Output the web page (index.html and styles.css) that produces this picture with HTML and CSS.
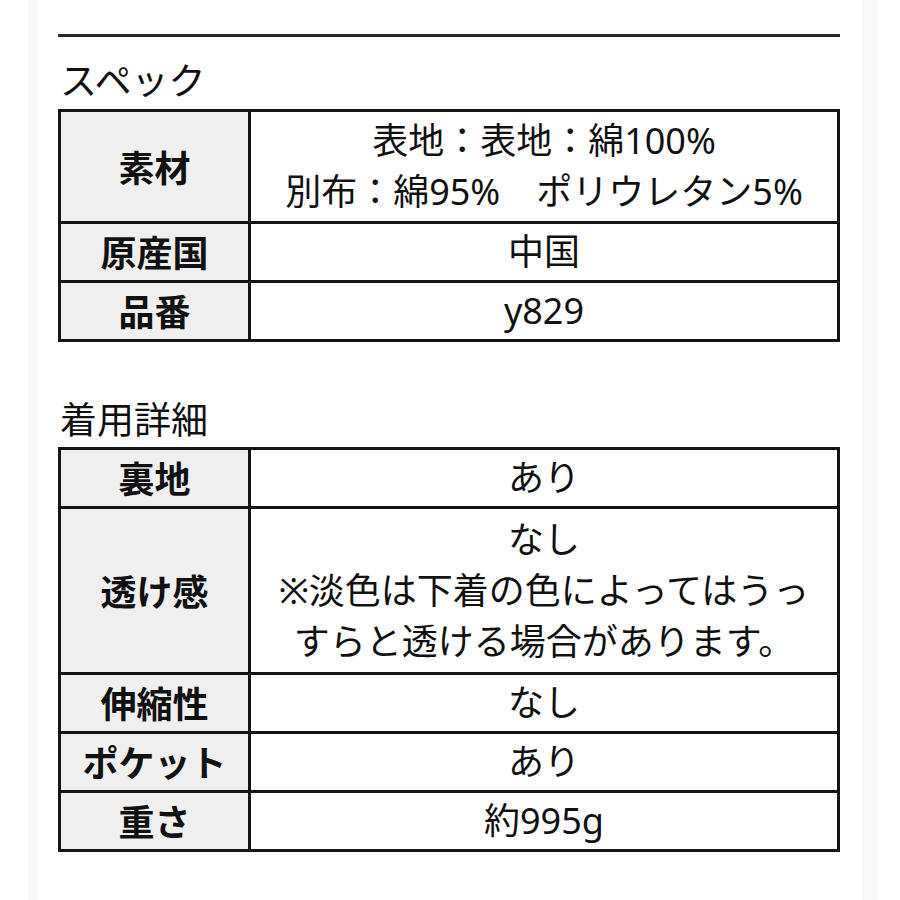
FILE: index.html
```html
<!DOCTYPE html>
<html lang="ja">
<head>
<meta charset="utf-8">
<link rel="stylesheet" href="styles.css">
</head>
<body>
<div class="frame">
  <div class="content">
    <hr class="rule">
    <h2 class="heading">スペック</h2>
    <table class="spec">
      <colgroup><col class="col-label"><col></colgroup>
      <tr><th>素材</th><td class="double">表地：表地：綿100%<br>別布：綿95%　ポリウレタン5%</td></tr>
      <tr><th>原産国</th><td>中国</td></tr>
      <tr><th>品番</th><td>y829</td></tr>
    </table>
    <h2 class="heading heading-second">着用詳細</h2>
    <table class="spec">
      <colgroup><col class="col-label"><col></colgroup>
      <tr><th>裏地</th><td>あり</td></tr>
      <tr><th>透け感</th><td class="tall">なし<br>※淡色は下着の色によってはうっすらと透ける場合があります。</td></tr>
      <tr><th>伸縮性</th><td>なし</td></tr>
      <tr><th>ポケット</th><td>あり</td></tr>
      <tr><th>重さ</th><td>約995g</td></tr>
    </table>
  </div>
</div>
</body>
</html>
```
FILE: styles.css
```css
html, body {
  margin: 0;
  padding: 0;
  background: #ffffff;
}
body {
  font-family: "Noto Sans", "Noto Sans CJK JP", sans-serif;
  color: #111111;
}
.frame {
  margin-left: 28px;
  width: 825px;
  min-height: 900px;
  border-left: 9px solid #f8f8f8;
  border-right: 15px solid #f8f8f8;
}
.content {
  padding: 34px 22px 0 21px;
}
.rule {
  margin: 0;
  border: 0;
  height: 3px;
  background: #2b2b2b;
}
.heading {
  margin: 17px 0 5px 2px;
  font-family: "Noto Sans CJK JP", sans-serif;
  font-size: 37px;
  line-height: 50px;
  font-weight: 400;
}
.heading-second {
  margin-top: 51px;
  margin-bottom: 4px;
}
.spec {
  width: 100%;
  border-collapse: collapse;
  table-layout: fixed;
  font-size: 36px;
  line-height: 51px;
}
.col-label {
  width: 190px;
}
.spec th,
.spec td {
  border: 3px solid #151515;
  padding: 2px 10px 3px;
  text-align: center;
  vertical-align: middle;
}
.spec th {
  background: #efefef;
  font-family: "Noto Sans CJK JP", sans-serif;
  font-weight: 700;
  padding: 2px 4px 3px;
}
.spec td {
  font-weight: 400;
}
.spec td.double {
  padding-top: 3px;
  padding-bottom: 4px;
}
.spec td.tall {
  padding-top: 5px;
  padding-bottom: 5px;
}
```
